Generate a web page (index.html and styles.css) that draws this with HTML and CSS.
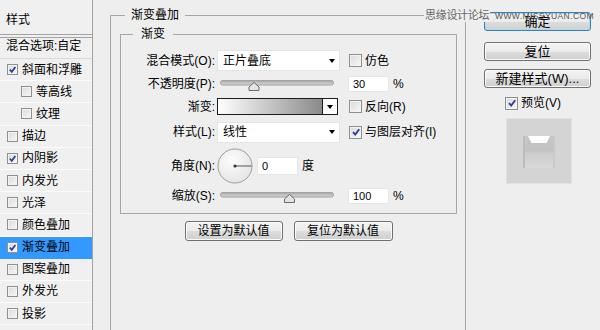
FILE: index.html
```html
<!DOCTYPE html>
<html lang="zh-CN">
<head>
<meta charset="utf-8">
<title>图层样式 - 渐变叠加</title>
<link rel="stylesheet" href="styles.css">
</head>
<body>
<div class="dialog">
  <nav class="sidebar">
    <div class="side-head">样式</div>
    <div class="side-blend">混合选项:自定</div>
    <ul class="side-list">
      <li class="side-item"><span class="cb"><svg viewBox="0 0 10 10"><path d="M2 5.2 L4.2 7.6 L8.2 2.2"/></svg></span>斜面和浮雕</li>
      <li class="side-item sub"><span class="cb"></span>等高线</li>
      <li class="side-item sub"><span class="cb"></span>纹理</li>
      <li class="side-item"><span class="cb"></span>描边</li>
      <li class="side-item"><span class="cb"><svg viewBox="0 0 10 10"><path d="M2 5.2 L4.2 7.6 L8.2 2.2"/></svg></span>内阴影</li>
      <li class="side-item"><span class="cb"></span>内发光</li>
      <li class="side-item"><span class="cb"></span>光泽</li>
      <li class="side-item"><span class="cb"></span>颜色叠加</li>
      <li class="side-item active"><span class="cb"><svg viewBox="0 0 10 10"><path d="M2 5.2 L4.2 7.6 L8.2 2.2"/></svg></span>渐变叠加</li>
      <li class="side-item"><span class="cb"></span>图案叠加</li>
      <li class="side-item"><span class="cb"></span>外发光</li>
      <li class="side-item"><span class="cb"></span>投影</li>
    </ul>
  </nav>

  <main class="main">
    <fieldset class="group outer">
      <legend>渐变叠加</legend>
      <fieldset class="group inner">
        <legend>渐变</legend>
        <div class="form">
          <span class="lbl">混合模式(O):</span>
          <div class="select"><span>正片叠底</span><span class="arrow"></span></div>
          <span class="check"><span class="cb big"></span>仿色</span>

          <span class="lbl">不透明度(P):</span>
          <svg class="slider" viewBox="0 0 123 14">
            <defs><linearGradient id="tr1" x1="0" y1="0" x2="0" y2="1"><stop offset="0" stop-color="#a8a8a8"/><stop offset="1" stop-color="#d8d8d8"/></linearGradient></defs>
            <rect x="3.5" y="3.5" width="113" height="4.5" rx="2.2" fill="url(#tr1)" stroke="#a0a0a0"/>
            <path d="M32 13.5 V10 L37 5.5 L42 10 V13.5 Z" fill="#e4e4e4" stroke="#6b6b6b"/>
          </svg>
          <div class="num"><span class="field">30</span><span class="pct">%</span></div>

          <span class="lbl">渐变:</span>
          <div class="gradient"><span class="ramp"></span><span class="gbtn"><span class="arrow"></span></span></div>
          <span class="check"><span class="cb big"></span>反向(R)</span>

          <span class="lbl">样式(L):</span>
          <div class="select"><span>线性</span><span class="arrow"></span></div>
          <span class="check"><span class="cb big"><svg viewBox="0 0 10 10"><path d="M2 5.2 L4.2 7.6 L8.2 2.2"/></svg></span>与图层对齐(I)</span>

          <span class="lbl">角度(N):</span>
          <div class="angle">
            <svg class="dial" viewBox="0 0 36 36">
              <defs><radialGradient id="dg" cx="0.4" cy="0.35" r="0.75"><stop offset="0" stop-color="#fdfdfd"/><stop offset="1" stop-color="#e2e2e2"/></radialGradient></defs>
              <circle cx="18" cy="18" r="17" fill="url(#dg)" stroke="#9c9c9c"/>
              <line x1="18" y1="18" x2="34.5" y2="18" stroke="#555" stroke-width="1"/>
              <circle cx="18" cy="18" r="1.6" fill="#333"/>
            </svg>
            <span class="field angle-field">0</span><span class="deg">度</span>
          </div>
          <span></span>

          <span class="lbl">缩放(S):</span>
          <svg class="slider" viewBox="0 0 123 14">
            <defs><linearGradient id="tr2" x1="0" y1="0" x2="0" y2="1"><stop offset="0" stop-color="#a8a8a8"/><stop offset="1" stop-color="#d8d8d8"/></linearGradient></defs>
            <rect x="3.5" y="3.5" width="113" height="4.5" rx="2.2" fill="url(#tr2)" stroke="#a0a0a0"/>
            <path d="M67.5 13.5 V10 L72.5 5.5 L77.5 10 V13.5 Z" fill="#e4e4e4" stroke="#6b6b6b"/>
          </svg>
          <div class="num"><span class="field">100</span><span class="pct">%</span></div>
        </div>
      </fieldset>
      <div class="defaults">
        <button class="btn def">设置为默认值</button>
        <button class="btn def">复位为默认值</button>
      </div>
    </fieldset>
  </main>

  <aside class="actions">
    <button class="btn wide primary">确定</button>
    <button class="btn wide reset">复位</button>
    <button class="btn wide new">新建样式(W)...</button>
    <span class="check preview-check"><span class="cb big"><svg viewBox="0 0 10 10"><path d="M2 5.2 L4.2 7.6 L8.2 2.2"/></svg></span>预览(V)</span>
    <div class="preview">
      <svg viewBox="0 0 66 66" width="66" height="66">
        <defs>
          <linearGradient id="pv" x1="0" y1="0" x2="0" y2="1">
            <stop offset="0" stop-color="#c6c6c6"/>
            <stop offset="0.45" stop-color="#c2c2c2"/>
            <stop offset="0.55" stop-color="#cdcdcd"/>
            <stop offset="1" stop-color="#d9d9d9"/>
          </linearGradient>
        </defs>
        <rect x="0.5" y="0.5" width="65" height="65" fill="#d4d4d4" stroke="#e2e2e2"/>
        <rect x="17" y="18" width="32" height="32" fill="url(#pv)"/>
        <polygon points="22,18 44,18 40.5,25 25.5,25" fill="#ffffff"/>
        <rect x="17" y="18" width="2" height="32" fill="#bdbdbd"/>
        <rect x="47" y="18" width="2" height="32" fill="#c9c9c9"/>
      </svg>
    </div>
  </aside>
</div>

<div class="wm-cn">思缘设计论坛</div>
<div class="wm-en">WWW.MISSYUAN.COM</div>
</body>
</html>
```

FILE: styles.css
```css
* { box-sizing: border-box; }
html, body { margin: 0; padding: 0; }
body {
  width: 600px;
  height: 330px;
  overflow: hidden;
  position: relative;
  background: #eeeeee;
  font-family: "Liberation Sans", "Noto Sans CJK SC", sans-serif;
  font-size: 12px;
  line-height: 14px;
  color: #000;
}

.dialog { display: flex; height: 330px; }

/* ---------- left style list ---------- */
.sidebar {
  flex: 0 0 93px;
  border-right: 1px solid #a3a3a3;
  background: #f0f0f0;
}
.side-head {
  height: 35px;
  border-bottom: 1px solid #a3a3a3;
  padding: 13px 0 0 6px;
}
.side-blend {
  margin-top: 2px;
  height: 22px;
  border-top: 1px solid #a3a3a3;
  border-bottom: 1px solid #dadada;
  padding: 1px 0 0 6px;
  white-space: nowrap;
}
.side-list { list-style: none; margin: 0; padding: 0; }
.side-item {
  height: 22.2px;
  border-bottom: 1px solid #fbfbfb;
  display: flex;
  align-items: center;
  padding-left: 7px;
  white-space: nowrap;
}
.side-item.sub { padding-left: 21px; }
.side-item.active { background: #3399ff; border-bottom-color: #3399ff; }

/* ---------- checkbox ---------- */
.cb {
  flex: none;
  width: 11px;
  height: 11px;
  margin-right: 4px;
  border: 1px solid #8e8f8f;
  background: linear-gradient(135deg, #d9d9d9, #f8f8f8);
  box-shadow: inset 0 0 0 1px #f3f3f3;
  display: inline-flex;
  align-items: center;
  justify-content: center;
}
.cb.big { width: 13px; height: 13px; margin-right: 3px; }
.cb svg { width: 9px; height: 9px; display: block; }
.cb.big svg { width: 10px; height: 10px; }
.cb path { fill: none; stroke: #2b3f96; stroke-width: 1.9; }

/* ---------- main area ---------- */
.main { flex: 0 0 373px; }
.group {
  margin: 0;
  border: 1px solid #a6a6a6;
  min-width: 0;
}
.group > legend { line-height: 14px; font-size: 12px; }
.outer {
  margin: 8px 0 0 17px;
  width: 356px;
  height: 324px;
  padding: 5px 8px 0 9px;
}
.outer > legend { margin-left: 5px; padding: 0 6px; }
.inner { padding: 9px 0 5px 0; }
.inner > legend { margin-left: 12px; padding: 0 8px; }

.form {
  display: grid;
  grid-template-columns: 96px 123px 1fr;
  grid-template-rows: 21px 26px 19px 32px 36px 24px;
  align-items: center;
}
.lbl { text-align: right; padding-right: 2px; white-space: nowrap; }

.select {
  height: 21px;
  background: #fff;
  border: 1px solid #e4e4e4;
  display: flex;
  align-items: center;
  justify-content: space-between;
  padding: 0 4px 0 5px;
}
.arrow {
  width: 0;
  height: 0;
  border-left: 3.5px solid transparent;
  border-right: 3.5px solid transparent;
  border-top: 4px solid #000;
}
.check { display: flex; align-items: center; margin-left: 9px; white-space: nowrap; }

.slider { display: block; width: 123px; height: 14px; }

.num { display: flex; align-items: center; margin-left: 8px; }
.field {
  width: 41px;
  height: 16px;
  background: #fff;
  border: 1px solid #e6e6e6;
  padding-left: 4px;
  font-size: 11px;
  line-height: 14px;
}
.pct { margin-left: 4px; }

.gradient {
  width: 121px;
  height: 17px;
  border: 1px solid #1c1c1c;
  display: flex;
}
.ramp { flex: 1; background: linear-gradient(to right, #ffffff, #8a8a8a); }
.gbtn {
  width: 15px;
  border-left: 1px solid #1c1c1c;
  background: #fff;
  display: flex;
  align-items: center;
  justify-content: center;
}

.angle { display: flex; align-items: center; white-space: nowrap; }
.dial { width: 36px; height: 36px; display: block; }
.angle-field { margin-left: 4px; height: 18px; line-height: 16px; }
.deg { margin-left: 4px; }

.defaults {
  display: flex;
  justify-content: center;
  gap: 11px;
  margin-top: 7px;
}

/* ---------- buttons ---------- */
.btn {
  font-family: "Liberation Sans", "Noto Sans CJK SC", sans-serif;
  font-size: 12px;
  line-height: 14px;
  color: #000;
  padding: 0;
  height: 20px;
  border: 1px solid #707070;
  border-radius: 3px;
  background: linear-gradient(#f3f3f3 0%, #ebebeb 50%, #dddddd 51%, #cfcfcf 100%);
  box-shadow: inset 0 0 0 1px #fbfbfb;
}
.def { width: 98px; }
.def + .def { width: 99px; }

/* ---------- right column ---------- */
.actions {
  flex: 0 0 134px;
  display: flex;
  flex-direction: column;
  align-items: flex-start;
  padding: 12px 0 0 18px;
}
.wide { width: 107px; height: 19px; font-size: 13px; }
.primary { border-color: #3c7fb1; box-shadow: inset 0 0 0 1px #a8dbf6; }
.reset { margin-top: 11px; }
.new { margin-top: 8px; }
.preview-check { margin: 8px 0 0 21px; }
.preview { margin: 8px 0 0 22px; width: 66px; height: 66px; }
.preview svg { display: block; }

/* ---------- watermark overlay ---------- */
.wm-cn {
  position: absolute;
  left: 424px;
  top: 8px;
  padding: 0 1px;
  background: #eeeeee;
  color: #666;
  font-size: 11px;
  line-height: 14px;
  letter-spacing: -0.3px;
}
.wm-en {
  position: absolute;
  left: 495px;
  top: 12px;
  color: #555;
  font-size: 8.5px;
  line-height: 9px;
  letter-spacing: 0.4px;
}
```
